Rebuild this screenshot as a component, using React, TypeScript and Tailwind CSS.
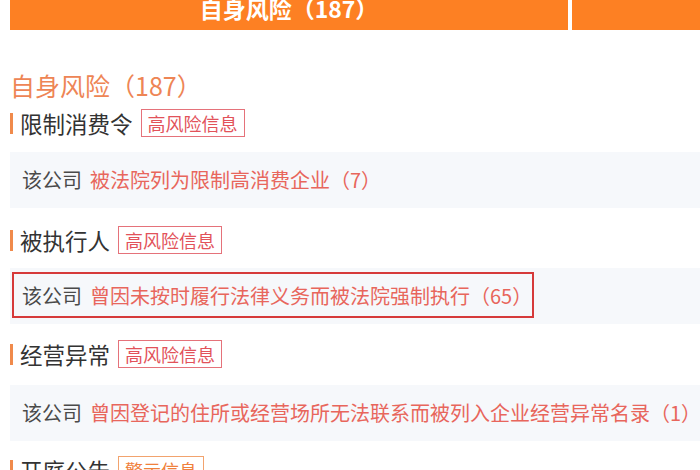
const font = { fontFamily: '"Noto Sans CJK SC", "Noto Sans", sans-serif' };

type Level = 'high' | 'warn';

function Badge({ level }: { level: Level }) {
  if (level === 'warn') {
    return (
      <span className="ml-[8px] flex h-[28px] shrink-0 items-center whitespace-nowrap border border-[#f2a36e] px-[6px] text-[18px] leading-none text-[#f0803c]">
        警示信息
      </span>
    );
  }
  return (
    <span className="ml-[8px] flex h-[28px] shrink-0 items-center whitespace-nowrap border border-[#e5727a] px-[6px] text-[18px] leading-none text-[#e2525a]">
      高风险信息
    </span>
  );
}

function SectionTitle({ title, level, className }: { title: string; level: Level; className: string }) {
  return (
    <div className={`flex h-[30px] items-center ${className}`}>
      <span className="h-[21px] w-[3px] shrink-0 bg-[#f08a4b]" />
      <span className="ml-[7px] shrink-0 whitespace-nowrap text-[22.5px] leading-none text-[#333333]">{title}</span>
      <Badge level={level} />
    </div>
  );
}

function Row({ text, className, marked }: { text: string; className: string; marked?: boolean }) {
  return (
    <div className={`relative flex h-[56px] items-center overflow-hidden bg-[#f6f8fb] pl-[12px] text-[20px] leading-none ${className}`}>
      <span className="shrink-0 whitespace-nowrap text-[#4a4a4a]">该公司</span>
      <span className="ml-[8px] shrink-0 whitespace-nowrap text-[#e8665c]">{text}</span>
      {marked && (
        <div className="absolute left-[2px] top-[4px] h-[46px] w-[522px] border-2 border-[#d63a3a]" />
      )}
    </div>
  );
}

export default function App() {
  return (
    <div className="h-[470px] w-[700px] overflow-hidden bg-white pl-[10px]" style={font}>
      <div className="-mt-[14px] flex h-[44px] gap-[4px]">
        <div className="flex w-[558px] items-center justify-center whitespace-nowrap bg-[#fd8023] text-[23px] font-bold leading-none text-white">
          自身风险（187）
        </div>
        <div className="flex-1 bg-[#fd8023]" />
      </div>

      <div className="mt-[40px] h-[30px] whitespace-nowrap text-[25px] leading-[30px] text-[#ee8555]">自身风险（187）</div>

      <SectionTitle title="限制消费令" level="high" className="mt-[8px]" />
      <Row text="被法院列为限制高消费企业（7）" className="mt-[14px]" />

      <SectionTitle title="被执行人" level="high" className="mt-[17px]" />
      <Row text="曾因未按时履行法律义务而被法院强制执行（65）" className="mt-[13px]" marked />

      <SectionTitle title="经营异常" level="high" className="mt-[15px]" />
      <Row text="曾因登记的住所或经营场所无法联系而被列入企业经营异常名录（1）" className="mt-[16px]" />

      <SectionTitle title="开庭公告" level="warn" className="mt-[14px]" />
    </div>
  );
}
